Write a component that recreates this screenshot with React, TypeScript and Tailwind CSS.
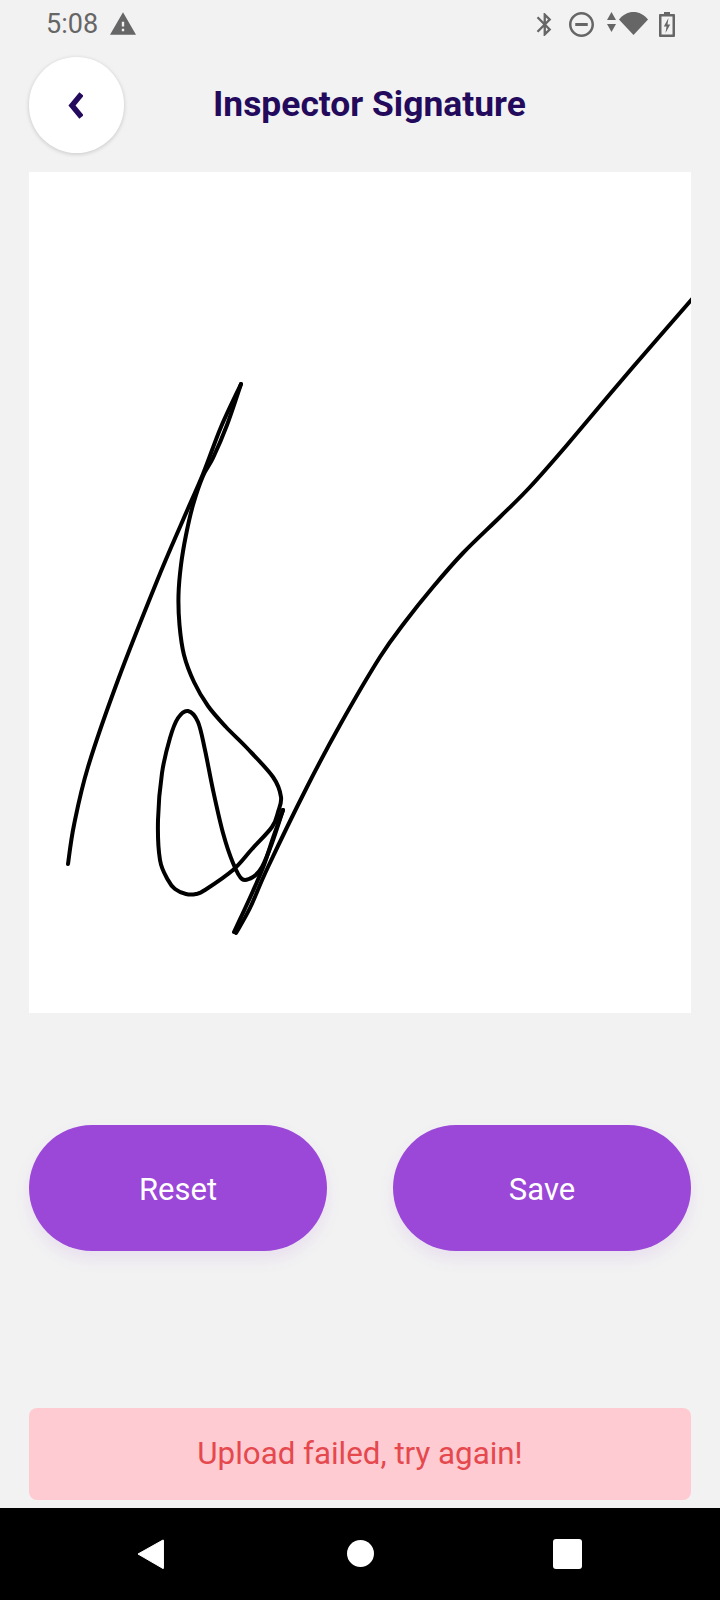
const strokeUp: [number, number][] = [
    [68, 864], [74, 825], [88, 767], [118, 680], [157, 581], [183, 520], [203, 474], [221, 427], [241, 384],
];
const strokeLoop: [number, number][] = [
    [241, 384], [227, 425], [213, 458], [203, 476], [193, 505], [186, 535], [181, 565], [178.5, 595], [179.5, 625], [184, 655],
    [194, 682], [208, 706], [226, 727], [247, 748], [273, 777], [281, 797], [278, 812], [272, 827], [252, 849], [233, 870],
    [205, 890], [196, 894], [186, 894], [175, 889], [168, 880], [160, 860], [158, 820], [162, 773], [170, 738], [178, 718],
    [188, 711], [198, 722], [205, 750], [213, 790], [223, 833], [233, 863], [242, 879], [253, 877], [262, 867], [272, 843], [283, 810],
];
const strokeBack: [number, number][] = [
    [283, 810], [273, 838], [264, 865], [253, 891], [242, 915], [234, 932],
];
const strokeLong: [number, number][] = [
    [236, 933], [250, 908], [268, 867], [307, 787], [340, 725], [380, 657], [405, 622], [433, 587], [463, 553],
    [500, 517], [530, 487], [567, 445], [633, 367], [700, 290],
];

// catmull-rom, so the signature doesn't look like a polyline
const toPath = (pts: [number, number][]) => {
    let d = `M${pts[0][0]} ${pts[0][1]}`;
    for (let i = 0; i < pts.length - 1; i++) {
        const p0 = pts[Math.max(i - 1, 0)];
        const p1 = pts[i];
        const p2 = pts[i + 1];
        const p3 = pts[Math.min(i + 2, pts.length - 1)];
        const c1x = p1[0] + (p2[0] - p0[0]) / 6;
        const c1y = p1[1] + (p2[1] - p0[1]) / 6;
        const c2x = p2[0] - (p3[0] - p1[0]) / 6;
        const c2y = p2[1] - (p3[1] - p1[1]) / 6;
        d += ` C${c1x} ${c1y} ${c2x} ${c2y} ${p2[0]} ${p2[1]}`;
    }
    return d;
};

const StatusBar = () => (
    <div className="h-[48px] flex items-center justify-between pl-[46px] pr-[45px] text-[#666666]">
        <div className="flex items-center">
            <span className="text-[27px] leading-none">5:08</span>
            <svg className="ml-[12px] mb-[1px]" width="26" height="23" viewBox="1 2 22 19" fill="currentColor">
                <path d="M1 21h22L12 2 1 21zm12-3h-2v-2h2v2zm0-4h-2v-4h2v4z" />
            </svg>
        </div>
        <div className="flex items-center">
            <svg width="16" height="23" viewBox="4.6 2 13.5 20" fill="currentColor">
                <path d="M17.71 7.71L12 2h-1v7.59L6.41 5 5 6.41 10.59 12 5 17.59 6.41 19 11 14.41V22h1l5.71-5.71-4.3-4.29 4.3-4.29zM13 5.83l1.88 1.88L13 9.59V5.83zm1.88 10.46L13 18.17v-3.76l1.88 1.88z" />
            </svg>
            <svg className="ml-[17px]" width="25" height="25" viewBox="2 2 20 20" fill="currentColor">
                <path d="M12 2C6.48 2 2 6.48 2 12s4.48 10 10 10 10-4.48 10-10S17.52 2 12 2zm0 18c-4.41 0-8-3.59-8-8s3.59-8 8-8 8 3.59 8 8-3.59 8-8 8z" />
                <path d="M7 10.8h10v2.4H7z" />
            </svg>
            <svg className="ml-[13px] mb-[4px]" width="9" height="20" viewBox="0 0 9 20" fill="currentColor">
                <path d="M4.5 0L9 8H0z" />
                <path d="M0 12h9l-4.5 8z" />
            </svg>
            <svg className="ml-[3px] mb-[2px]" width="29" height="24" viewBox="0 0 29 24" fill="currentColor">
                <path d="M0 8.5C4 3.5 9 1 14.5 1S25 3.5 29 8.5L14.5 24z" />
            </svg>
            <svg className="ml-[11px]" width="16" height="25" viewBox="0 0 16 25" fill="none">
                <path d="M5 0h6v2h4a1 1 0 0 1 1 1v21a1 1 0 0 1-1 1H1a1 1 0 0 1-1-1V3a1 1 0 0 1 1-1h4z" fill="currentColor" />
                <path d="M2.5 4.5h11v18h-11z" fill="#f2f2f2" />
                <path d="M9.5 6L4.8 14.5h2.7L6.5 21l4.7-8.500H8.5z" fill="currentColor" />
            </svg>
        </div>
    </div>
);

export default function App() {
    return (
        <div className="w-[720px] h-[1600px] flex flex-col bg-[#f2f2f2] font-['Roboto',sans-serif]">
            <StatusBar />

            <div className="mt-[9px] px-[29px] flex items-center">
                <button className="w-[95px] h-[96px] rounded-full bg-white shadow-[0_1px_4px_rgba(0,0,0,0.18)] flex items-center justify-center">
                    <svg width="15" height="27" viewBox="0 0 15 27" fill="none" className="mr-[2px]">
                        <path d="M13.5 2L4 13.5L13.5 25" stroke="#240a5c" strokeWidth="5.500" />
                    </svg>
                </button>
                <h1 className="ml-[89px] text-[35.4px] font-bold leading-none text-[#240a5c]">Inspector Signature</h1>
            </div>

            <div className="mt-[19px] mx-[29px] h-[841px] bg-white overflow-hidden">
                <svg width="662" height="841" viewBox="29 172 662 841" fill="none" stroke="#000000" strokeWidth="4" strokeLinecap="round" strokeLinejoin="round">
                    <path d={toPath(strokeUp)} />
                    <path d={toPath(strokeLoop)} />
                    <path d={toPath(strokeBack)} />
                    <path d={toPath(strokeLong)} />
                </svg>
            </div>

            <div className="mt-[112px] mx-[29px] flex justify-between">
                <button className="w-[298px] h-[126px] pt-[5px] rounded-[63px] bg-[#9b47d8] text-white text-[31px] shadow-[0_8px_16px_rgba(155,71,216,0.10)]">Reset</button>
                <button className="w-[298px] h-[126px] pt-[5px] rounded-[63px] bg-[#9b47d8] text-white text-[31px] shadow-[0_8px_16px_rgba(155,71,216,0.10)]">Save</button>
            </div>

            <div className="mt-[157px] mx-[29px] h-[92px] rounded-[8px] bg-[#ffcbd3] text-[#e5484d] text-[31.3px] flex items-center justify-center">
                Upload failed, try again!
            </div>

            <div className="mt-[8px] h-[92px] bg-black flex items-center pb-[1px]">
                <svg className="ml-[136px]" width="28" height="32" viewBox="0 0 28 32" fill="#ffffff">
                    <path d="M27 2L2 16l25 14.5a.6.6 0 0 0 .6-.6V2.5a.6.6 0 0 0-.6-.5z" stroke="#ffffff" strokeWidth="1" strokeLinejoin="round" />
                </svg>
                <div className="ml-[183px] w-[27px] h-[27px] rounded-full bg-white" />
                <div className="ml-[179px] w-[29px] h-[30px] rounded-[3px] bg-white" />
            </div>
        </div>
    );
}
